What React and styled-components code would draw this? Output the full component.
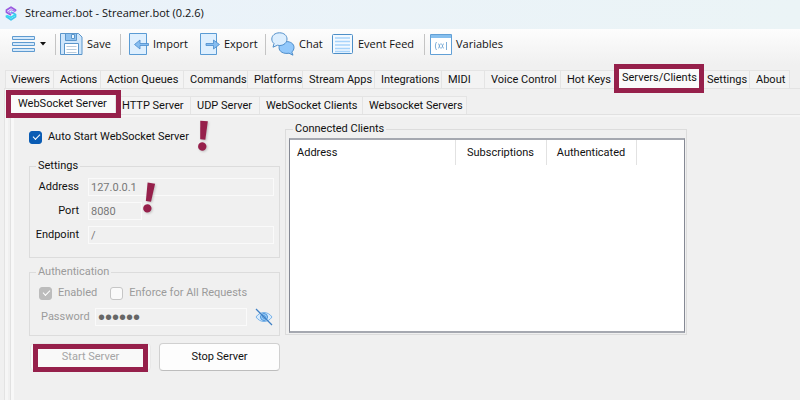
import React from "react";
import styled, { createGlobalStyle, css } from "styled-components";

const accent = "#96204b";

const Global = createGlobalStyle`
  * { box-sizing: border-box; }
  body { margin: 0; background: #f0f0f0; }
  button, input { font: inherit; color: inherit; }
`;

const Window = styled.div`
  min-height: 100vh;
  display: flex;
  flex-direction: column;
  background: #f0f0f0;
  color: #111;
  font: 11px/14px Roboto, "Liberation Sans", sans-serif;
  white-space: nowrap;
  overflow: hidden;
`;

const TitleBar = styled.header`
  display: flex;
  align-items: center;
  gap: 8px;
  height: 29px;
  padding: 0 5px 3px;
  background: linear-gradient(90deg, #eaf2fa, #ebf4f6);
  font: 11px/16px "Open Sans", "Noto Sans", sans-serif;
`;

const Title = styled.h1`
  margin: 0;
  font: inherit;
`;

const Toolbar = styled.nav`
  display: flex;
  align-items: center;
  height: 36px;
  padding: 0 0 6px 12px;
  background: linear-gradient(#fdfdfd, #f0f0f0);
  font: 11px/16px "Open Sans", "Noto Sans", sans-serif;
`;

const ToolButton = styled.button`
  display: flex;
  align-items: center;
  gap: 4px;
  width: ${(p) => p.$width}px;
  flex: none;
  padding: 0;
  border: 0;
  background: none;
  svg { flex: none; }
`;

const Separator = styled.span`
  width: 1px;
  height: 21px;
  margin-right: ${(p) => p.$after}px;
  background: #c4c4c4;
`;

const TabList = styled.div`
  display: flex;
  align-items: flex-end;
  padding-left: ${(p) => p.$indent}px;
`;

const Tab = styled.button`
  position: relative;
  flex: none;
  width: ${(p) => p.$width}px;
  height: 18px;
  padding: 0 0 0 6px;
  border: 1px solid #e4e4e4;
  border-width: 1px 1px 0 0;
  background: #f3f3f3;
  text-align: left;
  &:first-child { border-left-width: 1px; padding-left: 5px; }
  ${(p) =>
    p.$selected &&
    css`
      height: 20px;
      padding: 0 0 2px 7px;
      background: #fafafa;
      z-index: 1;
      &:first-child { padding-left: 7px; }
    `}
`;

const Marked = styled.span`
  &::after {
    content: "";
    position: absolute;
    inset: ${(p) => p.$inset};
    border: 5px solid ${accent};
    pointer-events: none;
  }
`;

const Pages = styled.main`
  flex: 1;
  display: flex;
  flex-direction: column;
  padding-top: 3px;
`;

const Page = styled.section`
  flex: 1;
  margin-left: 4px;
  border: 1px solid #e3e3e3;
  border-width: 1px 0 0 1px;
  box-shadow: inset 3px 0 #f6f6f6;
  display: flex;
  flex-direction: column;
  padding-top: 5px;
`;

const SubPage = styled.section`
  flex: 1;
  display: grid;
  grid-template-columns: 251px minmax(0, 402px);
  align-content: start;
  gap: 5px;
  margin-left: 5px;
  padding: 7px 18px;
  border: 1px solid #e1e1e1;
  border-width: 1px 0 0 1px;
  box-shadow: inset 3px 0 #f8f8f8, inset 0 2px #f5f5f5;
`;

const Column = styled.div`
  display: flex;
  flex-direction: column;
`;

const CheckLabel = styled.label`
  position: relative;
  display: flex;
  align-items: center;
  gap: 6px;
  color: ${(p) => (p.$muted ? "#9b9b9b" : "inherit")};
`;

const Check = styled.input`
  appearance: none;
  position: relative;
  flex: none;
  width: 13px;
  height: 13px;
  margin: 0;
  border: 1px solid #c6c6c6;
  border-radius: 3px;
  background: #fafafa;
  &:checked { background: #0a5cb4; border-color: #0a5cb4; }
  &:checked:disabled { background: #bcbcbc; border-color: #bcbcbc; }
  &:checked::after {
    content: "";
    position: absolute;
    left: 3px;
    top: 2px;
    width: 6px;
    height: 3px;
    border: solid #fff;
    border-width: 0 0 1px 1px;
    transform: rotate(-45deg);
  }
`;

const AutoStart = styled.div`
  display: flex;
  align-items: center;
  height: 30px;
`;

const Group = styled.fieldset`
  min-width: 0;
  margin: ${(p) => p.$top || 0}px 0 0;
  padding: ${(p) => p.$padding};
  border: 1px solid #dcdcdc;
  color: ${(p) => (p.$muted ? "#9b9b9b" : "inherit")};
`;

const Legend = styled.legend`
  margin-left: ${(p) => p.$indent}px;
  padding: 0 2px;
`;

const FieldRow = styled.div`
  display: grid;
  grid-template-columns: 49px minmax(0, 1fr);
  align-items: center;
  gap: 9px;
  height: 18px;
  & + & { margin-top: 6px; }
  label { text-align: right; }
`;

const Field = styled.input`
  width: ${(p) => p.$width || "100%"};
  min-width: 0;
  height: 18px;
  padding: 0 2px;
  border: 1px solid #fafafa;
  outline: 0;
  background: #f0f0f0;
  color: #777;
`;

const PortCell = styled.div`
  display: flex;
  position: relative;
`;

const Checks = styled.div`
  display: flex;
  gap: 13px;
  padding-left: 9px;
`;

const PasswordRow = styled.div`
  display: grid;
  grid-template-columns: 46px minmax(0, 1fr) 18px;
  align-items: center;
  column-gap: 8px;
  margin: 8px 6px 0 11px;
`;

const PasswordField = styled(Field)`
  color: #666;
  font-family: "Liberation Sans", sans-serif;
  font-size: 20px;
`;

const IconButton = styled.button`
  display: flex;
  padding: 0;
  border: 0;
  background: none;
`;

const Buttons = styled.div`
  display: grid;
  grid-template-columns: 1fr 1fr;
  gap: 8px;
  padding: 7px 0 0 1px;
`;

const PushButton = styled.button`
  position: relative;
  height: 28px;
  padding: 0;
  border: 1px solid #d0d0d0;
  border-bottom-color: #bdbdbd;
  border-radius: 4px;
  background: #fdfdfd;
  color: #111;
  &:disabled { color: #a5a5a5; border-color: #e8e8e8; background: #f9f9f9; }
`;

const Alert = styled.svg`
  position: absolute;
  left: ${(p) => p.$left}px;
  top: ${(p) => p.$top}px;
  filter: drop-shadow(1px 1px 1px #0003);
`;

const ListView = styled.div`
  height: 195px;
  border: 1px solid #858994;
  border-top: 2px solid #a5a8b0;
  border-bottom: 2px solid #a5a8b0;
  background: #fff;
`;

const Table = styled.table`
  table-layout: fixed;
  width: 100%;
  border-collapse: collapse;
`;

const HeadCell = styled.th`
  width: ${(p) => p.$width || "auto"};
  height: 25px;
  padding: 0 7px;
  border-right: ${(p) => (p.$width ? "1px solid #e2e2e2" : "0")};
  font-weight: 400;
  text-align: ${(p) => p.$align || "center"};
`;

const Exclamation = ({ left, top, tilt }) => (
  <Alert $left={left} $top={top} width="16" height="32" viewBox="0 0 16 32" aria-hidden="true">
    <g transform={`rotate(${tilt} 8 16)`} fill={accent}>
      <path d="M4.2 1h7.6l-1.2 18.5H5.4z" />
      <circle cx="8" cy="26.5" r="4.2" />
    </g>
  </Alert>
);

const Logo = () => (
  <svg width="12" height="15" viewBox="0 0 12 15" fill="none" strokeWidth="1.8" strokeLinejoin="round">
    <path d="M1.5 9.500v1.300L6 13.800l4.500-3V8.500L6 6" stroke="#3fc6ee" />
    <path d="M1.500 9.500 6 11.300l4-2.300" stroke="#2fdcf0" />
    <path d="M10.500 5V4L6 1.200 1.500 4v2.300L6 9" stroke="#9a5ae0" />
    <path d="M10.500 5.200 6 7.400 3.500 5.500 6 3.800z" stroke="#a86cf0" strokeWidth="1" />
  </svg>
);

const MenuIcon = () => (
  <svg width="24" height="18" viewBox="0 0 24 18" fill="#d5e9fb" stroke="#5f9bd0">
    <path d="M.5 1.5h22v3H.5zM.5 7.5h22v3H.5zM.5 13.5h22v3H.5z" />
  </svg>
);

const Caret = () => (
  <svg width="6" height="4" viewBox="0 0 6 4"><path d="M0 0h6L3 3.5z" fill="#111" /></svg>
);

const SaveIcon = () => (
  <svg width="23" height="22" viewBox="0 0 23 22" fill="#cfe6fb" stroke="#5b96cb">
    <path d="M.5.5h18l3.5 3.5v17.5H.5z" />
    <path d="M5.5.5h11v7h-11z" fill="#8fc2f0" />
    <path d="M11.5 1.5h3v4h-3z" fill="#e8f5ff" />
    <path d="M4.5 10.5h14v11h-14z" fill="#fff" />
    <path d="M6.5 13.5h10M6.5 16.5h10M6.5 19.5h10" stroke="#b8cbdc" />
  </svg>
);

const ImportIcon = () => (
  <svg width="20" height="22" viewBox="0 0 20 22">
    <path d="M.5.5h17v21H.5z" fill="#deeffe" stroke="#5a9bd4" />
    <path d="m5.5 11.5 5.5-4.5v3.5h8.5v2H11V16z" fill="#86bdf0" stroke="#4a8ccc" strokeWidth=".8" />
  </svg>
);

const ExportIcon = () => (
  <svg width="20" height="22" viewBox="0 0 20 22">
    <path d="M.5.5h16v21H.5z" fill="#deeffe" stroke="#5a9bd4" />
    <path d="m19.5 11.5-6-4.5v3.5H6v2h7.5V16z" fill="#86bdf0" stroke="#4a8ccc" strokeWidth=".8" />
  </svg>
);

const ChatIcon = () => (
  <svg width="24" height="24" viewBox="0 0 24 24" stroke="#4384c4" strokeWidth=".9">
    <path d="M15 9.5c5 0 8 2.5 8 6 0 2-1 3.5-2.2 4.5l1.2 3.2-4-2c-5.5 1-10-1.5-10-5.7 0-3.5 3-6 7-6z" fill="#92c8fb" />
    <path d="M8.5.8C13 .8 16 3.5 16 7s-3 6.5-7.5 6.5l-2-.3-4.500 2 1-3.7C1.500 10.3.8 8.700.8 7 .8 3.500 4 .8 8.500.8z" fill="#dceefe" />
  </svg>
);

const FeedIcon = () => (
  <svg width="22" height="21" viewBox="0 0 22 21">
    <rect x=".5" y=".5" width="20" height="19" rx="1" fill="#f2f9ff" stroke="#4d8fc8" />
    <path d="M3 4h15M3 7.5h15M3 11h15M3 14.5h15M3 17.5h15" stroke="#a8d4fb" strokeWidth="1.6" />
  </svg>
);

const VariablesIcon = () => (
  <svg width="22" height="21" viewBox="0 0 22 21" fill="none">
    <path d="M.5.5h21v20H.5z" fill="#fff" stroke="#62a0d6" />
    <path d="M1 1h20v3H1z" fill="#86bfee" />
    <path d="M6.500 8C5 10 5 14 6.500 16M16.500 8v8M8 10c2 0 2 4 0 4M10.800 10c-2 0-2 4 0 4M11 10c2 0 2 4 0 4M14 10c-2 0-2 4 0 4" stroke="#6fa5d4" strokeWidth=".9" />
  </svg>
);

const EyeOffIcon = () => (
  <svg width="18" height="18" viewBox="0 0 18 18" fill="none" stroke="#4a93d8">
    <path d="M1 9c4-6 12-6 16 0-4 6-12 6-16 0z" fill="#d8ebfd" stroke="#7ab3e8" />
    <circle cx="9" cy="9" r="3.5" fill="#9accf8" />
    <circle cx="9" cy="9" r="1.3" fill="#d8ebfd" />
    <path d="m1 1 16 16" stroke="#3f7fc4" strokeWidth="1.2" />
  </svg>
);

const pages = [
  ["Viewers", 49], ["Actions", 47], ["Action Queues", 83], ["Commands", 64],
  ["Platforms", 55], ["Stream Apps", 72], ["Integrations", 67], ["MIDI", 43],
  ["Voice Control", 76], ["Hot Keys", 54], ["Servers/Clients", 86],
  ["Settings", 49], ["About", 40],
];

const serverPages = [
  ["WebSocket Server", 106], ["HTTP Server", 75], ["UDP Server", 69],
  ["WebSocket Clients", 103], ["Websocket Servers", 104],
];

const Tabs = ({ items, selected, indent, label, inset }) => (
  <TabList role="tablist" aria-label={label} $indent={indent}>
    {items.map(([name, width]) => {
      const on = name === selected;
      return (
        <Tab key={name} role="tab" aria-selected={on} $selected={on} $width={width}>
          {on ? <Marked $inset={inset}>{name}</Marked> : name}
        </Tab>
      );
    })}
  </TabList>
);

export default function App() {
  return (
    <Window>
      <Global />
      <TitleBar>
        <Logo />
        <Title>Streamer.bot - Streamer.bot (0.2.6)</Title>
      </TitleBar>
      <Toolbar aria-label="Main">
        <ToolButton $width={43} aria-label="Menu"><MenuIcon /><Caret /></ToolButton>
        <Separator $after={4} />
        <ToolButton $width={60}><SaveIcon />Save</ToolButton>
        <Separator $after={8} />
        <ToolButton $width={71}><ImportIcon />Import</ToolButton>
        <ToolButton $width={65}><ExportIcon />Export</ToolButton>
        <Separator $after={5} />
        <ToolButton $width={61}><ChatIcon />Chat</ToolButton>
        <ToolButton $width={92}><FeedIcon />Event Feed</ToolButton>
        <Separator $after={5} />
        <ToolButton $width={80}><VariablesIcon />Variables</ToolButton>
      </Toolbar>
      <Pages>
        <Tabs items={pages} selected="Servers/Clients" indent={5} label="Sections" inset="-5px -4px -5px -1px" />
        <Page>
          <Tabs items={serverPages} selected="WebSocket Server" indent={5} label="Servers and clients" inset="-5px -6px -4px -5px" />
          <SubPage>
            <Column>
              <AutoStart>
                <CheckLabel>
                  <Check type="checkbox" defaultChecked />
                  Auto Start WebSocket Server
                  <Exclamation left={166} top={-10} tilt={4} />
                </CheckLabel>
              </AutoStart>
              <Group $top={7} $padding="5px 5px 13px 0">
                <Legend $indent={6}>Settings</Legend>
                <FieldRow>
                  <label htmlFor="address">Address</label>
                  <Field id="address" defaultValue="127.0.0.1" readOnly />
                </FieldRow>
                <FieldRow>
                  <label htmlFor="port">Port</label>
                  <PortCell>
                    <Field id="port" defaultValue="8080" readOnly $width="54px" />
                    <Exclamation left={53} top={-20} tilt={9} />
                  </PortCell>
                </FieldRow>
                <FieldRow>
                  <label htmlFor="endpoint">Endpoint</label>
                  <Field id="endpoint" defaultValue="/" readOnly />
                </FieldRow>
              </Group>
              <Group $top={7} $padding="7px 0 9px" $muted>
                <Legend $indent={6}>Authentication</Legend>
                <Checks>
                  <CheckLabel $muted><Check type="checkbox" defaultChecked disabled />Enabled</CheckLabel>
                  <CheckLabel $muted><Check type="checkbox" disabled />Enforce for All Requests</CheckLabel>
                </Checks>
                <PasswordRow>
                  <label htmlFor="password">Password</label>
                  <PasswordField id="password" type="password" defaultValue="secret" readOnly />
                  <IconButton aria-label="Show password"><EyeOffIcon /></IconButton>
                </PasswordRow>
              </Group>
              <Buttons>
                <PushButton disabled><Marked $inset="0 2px -2px 2px">Start Server</Marked></PushButton>
                <PushButton>Stop Server</PushButton>
              </Buttons>
            </Column>
            <Column>
              <Group $padding="2px 1px 1px 3px">
                <Legend $indent={4}>Connected Clients</Legend>
                <ListView>
                  <Table>
                    <thead>
                      <tr>
                        <HeadCell $width="165px" $align="left">Address</HeadCell>
                        <HeadCell $width="91px">Subscriptions</HeadCell>
                        <HeadCell $width="90px">Authenticated</HeadCell>
                        <HeadCell aria-hidden="true" />
                      </tr>
                    </thead>
                  </Table>
                </ListView>
              </Group>
            </Column>
          </SubPage>
        </Page>
      </Pages>
    </Window>
  );
}
